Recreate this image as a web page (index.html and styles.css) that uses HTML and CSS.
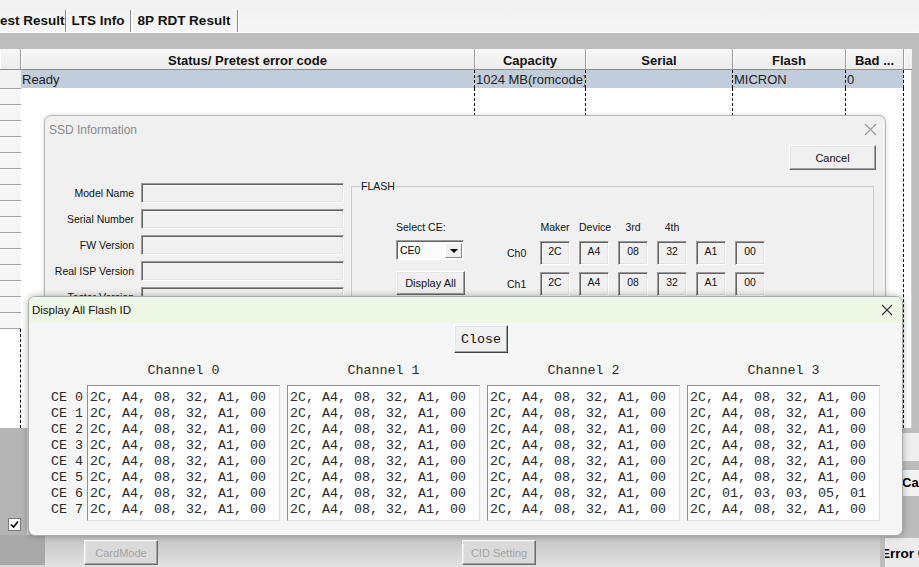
FILE: index.html
```html
<!DOCTYPE html>
<html lang="en">
<head>
    <meta charset="UTF-8">
    <meta name="viewport" content="width=device-width, initial-scale=1.0">
    <title>Display All Flash ID</title>
    <link rel="stylesheet" href="styles.css">
</head>
<body>
    <!-- Ventana principal (fondo) -->
    <div class="app">
        <div class="tabs">
            <span class="tab tab1">est Result</span>
            <span class="tab tab2">LTS Info</span>
            <span class="tab tab3">8P RDT Result</span>
        </div>
        <div class="band"></div>
        <div class="list-wrap">
            <div class="list">
                <div class="list-head">
                    <div class="hcell w0"></div>
                    <div class="hcell w1">Status/ Pretest error code</div>
                    <div class="hcell w2">Capacity</div>
                    <div class="hcell w3">Serial</div>
                    <div class="hcell w4">Flash</div>
                    <div class="hcell w5">Bad ...</div>
                    <div class="hcell w6"></div>
                </div>
                <div class="list-body">
                    <div class="col w0 rowhead">
                        <div class="rh-first"></div>
                        <div class="rh-lines"></div>
                        <div class="fill"></div>
                    </div>
                    <div class="col w1"><div class="cell">Ready</div><div class="fill"></div></div>
                    <div class="col w2"><div class="cell">1024 MB(romcode)</div><div class="fill"></div></div>
                    <div class="col w3"><div class="cell"></div><div class="fill"></div></div>
                    <div class="col w4"><div class="cell">MICRON</div><div class="fill"></div></div>
                    <div class="col w5"><div class="cell">0</div><div class="fill"></div></div>
                    <div class="col w6"></div>
                </div>
            </div>
            <div class="gutter"></div>
        </div>
        <div class="bottom">
            <div class="b-left">
                <div class="b-left-top">
                    <div class="b-strip">
                        <span class="check">
                            <svg width="9" height="9" viewBox="0 0 9 9"><path d="M1 4.5L3.5 7L8 1.5" fill="none" stroke="#000" stroke-width="1.6"/></svg>
                        </span>
                    </div>
                </div>
                <div class="b-left-bot"></div>
            </div>
            <div class="b-main">
                <button class="btn off card">CardMode</button>
                <button class="btn off cid">CID Setting</button>
            </div>
            <div class="b-right">
                <div class="rp1"></div>
                <div class="rp2">Ca</div>
                <div class="rp3"><span>Error C</span></div>
            </div>
        </div>
    </div>

    <!-- Dialogo SSD Information -->
    <div class="win ssd">
        <div class="ssd-title">
            <span>SSD Information</span>
            <svg width="13" height="13" viewBox="0 0 13 13"><path d="M1 1L12 12M12 1L1 12" stroke="#9c9c9c" stroke-width="1.1"/></svg>
        </div>
        <div class="ssd-top">
            <button class="btn cancel">Cancel</button>
        </div>
        <div class="ssd-main">
            <div class="info-form">
                <label>Model Name</label><span class="field"></span>
                <label>Serial Number</label><span class="field"></span>
                <label>FW Version</label><span class="field"></span>
                <label>Real ISP Version</label><span class="field"></span>
                <label>Tester Version</label><span class="field"></span>
            </div>
            <fieldset class="group">
                <legend>FLASH</legend>
                <div class="flash-inner">
                    <div class="ce-col">
                        <div class="lbl">Select CE:</div>
                        <div class="combo"><span class="combo-text">CE0</span><span class="drop"><i></i></span></div>
                        <button class="btn show-all">Display All</button>
                        <button class="btn show-all"></button>
                    </div>
                    <div class="id-grid">
                        <span></span>
                        <span class="idh">Maker</span>
                        <span class="idh">Device</span>
                        <span class="idh">3rd</span>
                        <span class="idh">4th</span>
                        <span></span>
                        <span></span>

                        <span class="chl">Ch0</span>
                        <span class="idbox">2C</span>
                        <span class="idbox">A4</span>
                        <span class="idbox">08</span>
                        <span class="idbox">32</span>
                        <span class="idbox">A1</span>
                        <span class="idbox">00</span>

                        <span class="chl">Ch1</span>
                        <span class="idbox">2C</span>
                        <span class="idbox">A4</span>
                        <span class="idbox">08</span>
                        <span class="idbox">32</span>
                        <span class="idbox">A1</span>
                        <span class="idbox">00</span>
                    </div>
                </div>
            </fieldset>
        </div>
    </div>

    <!-- Dialogo Display All Flash ID -->
    <div class="win flashid">
        <div class="fid-title">
            <span>Display All Flash ID</span>
            <svg width="12" height="12" viewBox="0 0 12 12"><path d="M1 1L11 11M11 1L1 11" stroke="#333" stroke-width="1.1"/></svg>
        </div>
        <div class="fid-body">
            <button class="btn close">Close</button>
            <div class="chan-grid">
                <span></span>
                <span class="chan">Channel 0</span>
                <span class="chan">Channel 1</span>
                <span class="chan">Channel 2</span>
                <span class="chan">Channel 3</span>

                <div class="ce-labels">CE 0
CE 1
CE 2
CE 3
CE 4
CE 5
CE 6
CE 7</div>
                <div class="idlist">2C, A4, 08, 32, A1, 00
2C, A4, 08, 32, A1, 00
2C, A4, 08, 32, A1, 00
2C, A4, 08, 32, A1, 00
2C, A4, 08, 32, A1, 00
2C, A4, 08, 32, A1, 00
2C, A4, 08, 32, A1, 00
2C, A4, 08, 32, A1, 00</div>
                <div class="idlist">2C, A4, 08, 32, A1, 00
2C, A4, 08, 32, A1, 00
2C, A4, 08, 32, A1, 00
2C, A4, 08, 32, A1, 00
2C, A4, 08, 32, A1, 00
2C, A4, 08, 32, A1, 00
2C, A4, 08, 32, A1, 00
2C, A4, 08, 32, A1, 00</div>
                <div class="idlist">2C, A4, 08, 32, A1, 00
2C, A4, 08, 32, A1, 00
2C, A4, 08, 32, A1, 00
2C, A4, 08, 32, A1, 00
2C, A4, 08, 32, A1, 00
2C, A4, 08, 32, A1, 00
2C, A4, 08, 32, A1, 00
2C, A4, 08, 32, A1, 00</div>
                <div class="idlist">2C, A4, 08, 32, A1, 00
2C, A4, 08, 32, A1, 00
2C, A4, 08, 32, A1, 00
2C, A4, 08, 32, A1, 00
2C, A4, 08, 32, A1, 00
2C, A4, 08, 32, A1, 00
2C, 01, 03, 03, 05, 01
2C, A4, 08, 32, A1, 00</div>
            </div>
        </div>
    </div>
</body>
</html>
```

FILE: styles.css
```css
/* General */
* {
    box-sizing: border-box;
}
body {
    margin: 0;
    width: 919px;
    height: 567px;
    overflow: hidden;
    position: relative;
    font-family: "Liberation Sans", Arial, sans-serif;
    background: #f0f0f0;
    color: #000;
}

/* Ventana de fondo */
.app {
    display: flex;
    flex-direction: column;
    height: 567px;
}
.tabs {
    height: 33px;
    display: flex;
    align-items: flex-end;
    background: linear-gradient(#f1f1f1, #f6f6f6);
    border-bottom: 1px solid #fdfdfd;
}
.tab {
    height: 22px;
    line-height: 22px;
    font-size: 13.5px;
    font-weight: bold;
    color: #111;
    text-align: center;
    white-space: nowrap;
    border-right: 1px solid #8a8a8a;
    box-shadow: 1px 0 #fff;
}
.tab1 { width: 66px; text-align: left; }
.tab2 { width: 65px; }
.tab3 { width: 107px; }

.band {
    height: 16px;
    background: #bebebe;
}

.list-wrap {
    display: flex;
    height: 379px;
}
.list {
    width: 912px;
    display: flex;
    flex-direction: column;
}
.gutter {
    flex: 1;
    background: #bebebe;
}

.w0 { width: 21px; }
.w1 { width: 454px; }
.w2 { width: 111px; }
.w3 { width: 147px; }
.w4 { width: 113px; }
.w5 { width: 58px; }
.w6 { width: 8px; }

.list-head {
    display: flex;
    height: 21px;
    background: linear-gradient(#f6f6f6, #ececec);
    border-bottom: 1px solid #8e8e8e;
}
.hcell {
    height: 20px;
    line-height: 23px;
    font-size: 13px;
    font-weight: bold;
    text-align: center;
    color: #111;
    white-space: nowrap;
    overflow: hidden;
    border-right: 1px solid #9c9c9c;
    box-shadow: inset 1px 0 #fff;
}
.hcell.w6 {
    border-right: none;
}

.list-body {
    flex: 1;
    display: flex;
    background: #fff;
}
.col {
    display: flex;
    flex-direction: column;
}
.cell {
    height: 18px;
    line-height: 20px;
    padding-left: 1px;
    font-size: 13px;
    color: #222;
    white-space: nowrap;
    overflow: hidden;
    background: #c1cddb;
    border-right: 1px dashed #000;
}
.fill {
    flex: 1;
    border-right: 1px dashed #000;
}
.col.w6 {
    background: #fdfdfd;
    border-right: 1px solid #d0d0d0;
}
.rh-first {
    height: 19px;
    background: #f2f2f2;
    border-bottom: 1px solid #a4a4a4;
}
.rh-lines {
    height: 240px;
    background: repeating-linear-gradient(to bottom, #f6f6f6 0, #f6f6f6 15px, #a4a4a4 15px, #a4a4a4 16px);
}

/* Panel inferior */
.bottom {
    height: 139px;
    display: flex;
}
.b-left {
    width: 45px;
    display: flex;
    flex-direction: column;
}
.b-left-top {
    height: 107px;
    background: #c0c0c0;
}
.b-strip {
    width: 28px;
    height: 100%;
    background: #b4b4b4;
    border-right: 1px solid #dcdcdc;
    display: flex;
    align-items: flex-end;
    padding: 0 0 4px 8px;
}
.check {
    width: 13px;
    height: 13px;
    background: #fff;
    border: 1px solid #7a7a7a;
    display: flex;
    align-items: center;
    justify-content: center;
}
.b-left-bot {
    flex: 1;
    background: #a9a9a9;
    border-bottom: 2px solid #d8d8d8;
}
.b-main {
    flex: 1;
    display: flex;
    align-items: flex-end;
    padding-bottom: 2px;
    background: linear-gradient(#b4b4b4, #c4c4c4 78%, #e2e2e2);
}
.b-right {
    width: 39px;
    background: #bcbcbc;
    padding-left: 5px;
    display: flex;
    flex-direction: column;
}
.rp1 {
    margin-top: 5px;
    height: 28px;
    background: #efefef;
}
.rp2 {
    margin: 9px 0 0 16px;
    height: 26px;
    line-height: 26px;
    background: #f2f2f2;
    border-left: 1px solid #8c8c8c;
    font-size: 13px;
    font-weight: bold;
    white-space: nowrap;
}
.rp3 {
    margin-top: 42px;
    flex: 1;
    background: #ebebeb;
    overflow: hidden;
    white-space: nowrap;
    font-size: 13.5px;
    font-weight: bold;
    line-height: 32px;
}
.rp3 span {
    margin-left: -4px;
}

/* Botones */
.btn {
    font-family: "Liberation Sans", Arial, sans-serif;
    font-size: 11px;
    color: #111;
    background: #f0f0f0;
    border: 1px solid;
    border-color: #fff #6a6a6a #6a6a6a #fff;
    box-shadow: inset -1px -1px #a0a0a0, inset 1px 1px #e6e6e6;
    padding: 0;
}
.btn.off {
    width: 74px;
    height: 25px;
    color: #a3a3a3;
    background: #dadada;
}
.card { margin-left: 39px; }
.cid { margin-left: 304px; }

/* Ventanas */
.win {
    position: absolute;
    display: flex;
    flex-direction: column;
    overflow: hidden;
}

/* SSD Information */
.ssd {
    left: 44px;
    top: 115px;
    width: 842px;
    height: 330px;
    background: #f0f0f0;
    border: 1px solid #b7b7b7;
    border-radius: 7px 7px 0 0;
    box-shadow: 0 0 5px rgba(0, 0, 0, 0.15);
}
.ssd-title {
    height: 27px;
    padding: 0 8px 0 4px;
    display: flex;
    align-items: center;
    justify-content: space-between;
    font-size: 12px;
    color: #8a8a8a;
}
.ssd-top {
    display: flex;
    justify-content: flex-end;
    padding-right: 9px;
    margin-top: 2px;
}
.cancel {
    width: 87px;
    height: 25px;
}
.ssd-main {
    display: flex;
    align-items: flex-start;
}
.info-form {
    margin-top: 13px;
    display: grid;
    grid-template-columns: 89px 203px;
    grid-auto-rows: 20px;
    column-gap: 7px;
    row-gap: 6px;
}
.info-form label {
    font-size: 10.5px;
    line-height: 20px;
    text-align: right;
    color: #111;
    white-space: nowrap;
}
.field {
    background: #f0f0f0;
    border: 1px solid;
    border-color: #9a9a9a #fff #fff #9a9a9a;
    box-shadow: inset 1px 1px #646464, inset -1px -1px #e3e3e3;
}
.group {
    margin: 10px 0 0 7px;
    width: 523px;
    height: 200px;
    padding: 0 0 0 8px;
    border: 1px solid #cbcbcb;
    min-width: 0;
}
.group legend {
    padding: 0 1px;
    font-size: 10.5px;
    line-height: 13px;
    color: #111;
}
.flash-inner {
    display: flex;
    margin: 27px 0 0 36px;
}
.ce-col {
    width: 68px;
    display: flex;
    flex-direction: column;
}
.lbl {
    height: 14px;
    line-height: 14px;
    font-size: 10.5px;
    color: #111;
}
.combo {
    margin-top: 6px;
    height: 20px;
    display: flex;
    background: #fbfbfb;
    border: 1px solid;
    border-color: #9a9a9a #fff #fff #9a9a9a;
    box-shadow: inset 1px 1px #646464;
}
.combo-text {
    flex: 1;
    font-size: 10.5px;
    line-height: 18px;
    padding-left: 3px;
}
.drop {
    width: 17px;
    margin: 2px 1px 1px 0;
    background: #f0f0f0;
    border: 1px solid;
    border-color: #fff #8a8a8a #8a8a8a #fff;
    display: flex;
    align-items: center;
    justify-content: center;
}
.drop i {
    width: 0;
    height: 0;
    border-left: 4px solid transparent;
    border-right: 4px solid transparent;
    border-top: 4px solid #000;
}
.show-all {
    margin-top: 11px;
    width: 69px;
    height: 24px;
}
.id-grid {
    margin-left: 43px;
    display: grid;
    grid-template-columns: 24px repeat(6, 30px);
    grid-template-rows: 14px 24px 24px;
    column-gap: 9px;
    row-gap: 7px;
}
.idh {
    font-size: 10.5px;
    line-height: 14px;
    text-align: center;
    white-space: nowrap;
    color: #111;
}
.chl {
    font-size: 10.5px;
    line-height: 25px;
    color: #111;
}
.idbox {
    font-size: 10.5px;
    line-height: 19px;
    text-align: center;
    color: #111;
    background: #f0f0f0;
    border: 1px solid;
    border-color: #9a9a9a #fff #fff #9a9a9a;
    box-shadow: inset 1px 1px #646464, inset -1px -1px #e3e3e3;
}

/* Display All Flash ID */
.flashid {
    left: 28px;
    top: 296px;
    width: 875px;
    height: 240px;
    background: #f6f6f6;
    border: 1px solid #a9aea6;
    border-radius: 7px;
    box-shadow: 0 0 7px rgba(0, 0, 0, 0.3);
}
.fid-title {
    height: 26px;
    padding: 0 9px 0 3px;
    display: flex;
    align-items: center;
    justify-content: space-between;
    background: #eef6e6;
    font-size: 11.5px;
    color: #111;
}
.fid-body {
    display: flex;
    flex-direction: column;
    align-items: flex-start;
}
.close {
    margin: 2px 0 0 425px;
    width: 54px;
    height: 28px;
    font-family: "Liberation Mono", "Courier New", monospace;
    font-size: 13.33px;
    border-color: #fff #404040 #404040 #fff;
}
.chan-grid {
    margin: 10px 0 0 14px;
    display: grid;
    grid-template-columns: 37px repeat(4, 193px);
    column-gap: 7px;
    row-gap: 6px;
    font-family: "Liberation Mono", "Courier New", monospace;
    font-size: 13.33px;
    line-height: 16px;
    color: #2a2a2a;
}
.chan {
    text-align: center;
}
.ce-labels {
    white-space: pre;
    text-align: right;
    padding-top: 5px;
    margin-right: -3px;
}
.idlist {
    height: 136px;
    white-space: pre;
    background: #fff;
    padding: 4px 2px 2px;
    border: 1px solid;
    border-color: #8f8f8f #e0e0e0 #e0e0e0 #8f8f8f;
}
```
